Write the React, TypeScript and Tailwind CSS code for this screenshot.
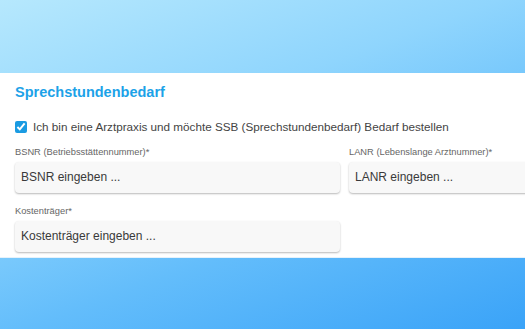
import React from 'react';

const fieldClass =
  "w-full h-[31px] rounded-[4px] bg-[#f8f8f8] px-[6px] text-[12px] text-[#333] placeholder:text-[#3a3a3a] shadow-[0_1px_2px_rgba(0,0,0,0.28)] outline-none";

const Field: React.FC<{ label: string; placeholder: string; className?: string }> = ({ label, placeholder, className }) => (
  <div className={className}>
    <label className="block text-[9.3px] leading-[11px] text-[#666] mb-[4px]">{label}</label>
    <input className={fieldClass} placeholder={placeholder} />
  </div>
);

export default function App() {
  return (
    <div className="w-[525px] h-[329px] overflow-hidden bg-[linear-gradient(160deg,#b6e8fd_0%,#8fd5fd_35%,#63bdfb_65%,#3aa3f8_100%)] font-['Liberation_Sans',Arial,sans-serif]">
      <div className="mt-[73px] h-[185px] bg-white pl-[15px] pt-[10px] border-b border-[#e6f2fb]">
        <h2 className="text-[14.5px] leading-[18px] font-bold text-[#1ca2e8]">Sprechstundenbedarf</h2>
        <label className="mt-[17px] flex items-center gap-[6px] text-[11.7px] text-[#444]">
          <input type="checkbox" defaultChecked className="w-[12px] h-[12px] m-0 accent-[#1a9be2]" />
          <span>Ich bin eine Arztpraxis und möchte SSB (Sprechstundenbedarf) Bedarf bestellen</span>
        </label>
        <div className="mt-[11px] flex gap-[9px]">
          <Field className="w-[325px] shrink-0" label="BSNR (Betriebsstättennummer)*" placeholder="BSNR eingeben ..." />
          <Field className="w-[325px] shrink-0" label="LANR (Lebenslange Arztnummer)*" placeholder="LANR eingeben ..." />
        </div>
        <div className="mt-[13px] flex">
          <Field className="w-[325px] shrink-0" label="Kostenträger*" placeholder="Kostenträger eingeben ..." />
        </div>
      </div>
    </div>
  );
}
